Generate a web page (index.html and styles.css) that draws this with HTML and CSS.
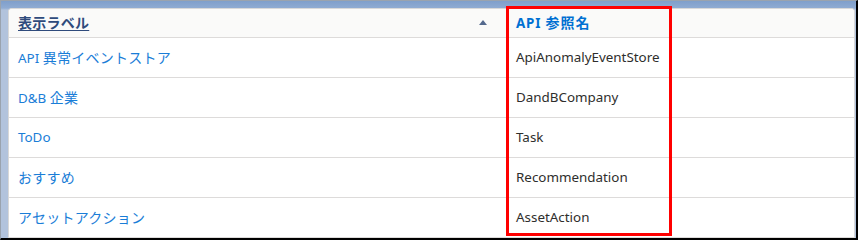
FILE: index.html
```html
<!DOCTYPE html>
<html lang="ja">
<head>
<meta charset="utf-8">
<link rel="stylesheet" href="styles.css">
</head>
<body>
<div class="frame">
  <div class="card">
    <div class="table">
      <div class="row head">
        <div class="cell c1"><span class="sort-label ja">表示ラベル</span>
          <svg class="tri" width="8" height="5" viewBox="0 0 8 5"><path d="M0 5 L4 0 L8 5 Z" fill="#54698d"/></svg>
        </div>
        <div class="cell c2"><span class="api-head">API <span class="ja">参照名</span></span></div>
        <div class="cell c3"></div>
      </div>
      <div class="row">
        <div class="cell c1"><a class="link">API <span class="ja">異常イベントストア</span></a></div>
        <div class="cell c2">ApiAnomalyEventStore</div>
        <div class="cell c3"></div>
      </div>
      <div class="row">
        <div class="cell c1"><a class="link">D&amp;B <span class="ja">企業</span></a></div>
        <div class="cell c2">DandBCompany</div>
        <div class="cell c3"></div>
      </div>
      <div class="row">
        <div class="cell c1"><a class="link">ToDo</a></div>
        <div class="cell c2">Task</div>
        <div class="cell c3"></div>
      </div>
      <div class="row">
        <div class="cell c1"><a class="link ja">おすすめ</a></div>
        <div class="cell c2">Recommendation</div>
        <div class="cell c3"></div>
      </div>
      <div class="row">
        <div class="cell c1"><a class="link ja">アセットアクション</a></div>
        <div class="cell c2">AssetAction</div>
        <div class="cell c3"></div>
      </div>
    </div>
  </div>
  <div class="highlight"></div>
</div>
</body>
</html>
```
FILE: styles.css
```css
html, body {
  margin: 0;
  padding: 0;
}
body {
  font-family: "Noto Sans", "Noto Sans CJK JP", sans-serif;
  font-size: 13.4px;
  color: #2e2e2c;
}
.frame {
  position: relative;
  width: 858px;
  height: 240px;
  box-sizing: border-box;
  border-top: 1px solid #9aa3ae;
  border-left: 1px solid #9aa3ae;
  border-right: 2px solid #000;
  border-bottom: 2px solid #000;
  background: linear-gradient(180deg, #7f9fcb 0px, #8fabd2 7px, #b2c3dc 9px, #b2c3dc 100%);
  overflow: hidden;
  padding: 7px 1px 0 7px;
}
.card {
  background: #fff;
  border: 1px solid #d8d8d8;
  border-bottom: none;
  border-radius: 4px 4px 0 0;
  height: 240px;
  overflow: hidden;
}
.table {
  display: flex;
  flex-direction: column;
}
.row {
  display: grid;
  grid-template-columns: 498px 164px 1fr;
  height: 39px;
  border-bottom: 1px solid #dddbda;
  align-items: center;
}
.row.head {
  height: 28px;
  background: #fafaf9;
}
.cell {
  padding: 0 9px 2px;
  white-space: nowrap;
  display: flex;
  align-items: center;
}
.ja {
  font-size: 14px;
  letter-spacing: 0.25px;
}
.head .c1 {
  justify-content: space-between;
  padding-right: 20px;
}
.sort-label {
  color: #2f4b7c;
  font-weight: 700;
  text-decoration: underline;
  text-underline-offset: 2px;
}
.tri {
  display: block;
}
.api-head {
  color: #0070d2;
  font-weight: 700;
  letter-spacing: 0.8px;
}
.api-head .ja {
  letter-spacing: 1px;
}
.link {
  color: #1a7dd7;
  text-decoration: none;
}
.highlight {
  position: absolute;
  left: 505px;
  top: 5px;
  width: 160px;
  height: 224px;
  border: 3px solid #ff0000;
}
```
